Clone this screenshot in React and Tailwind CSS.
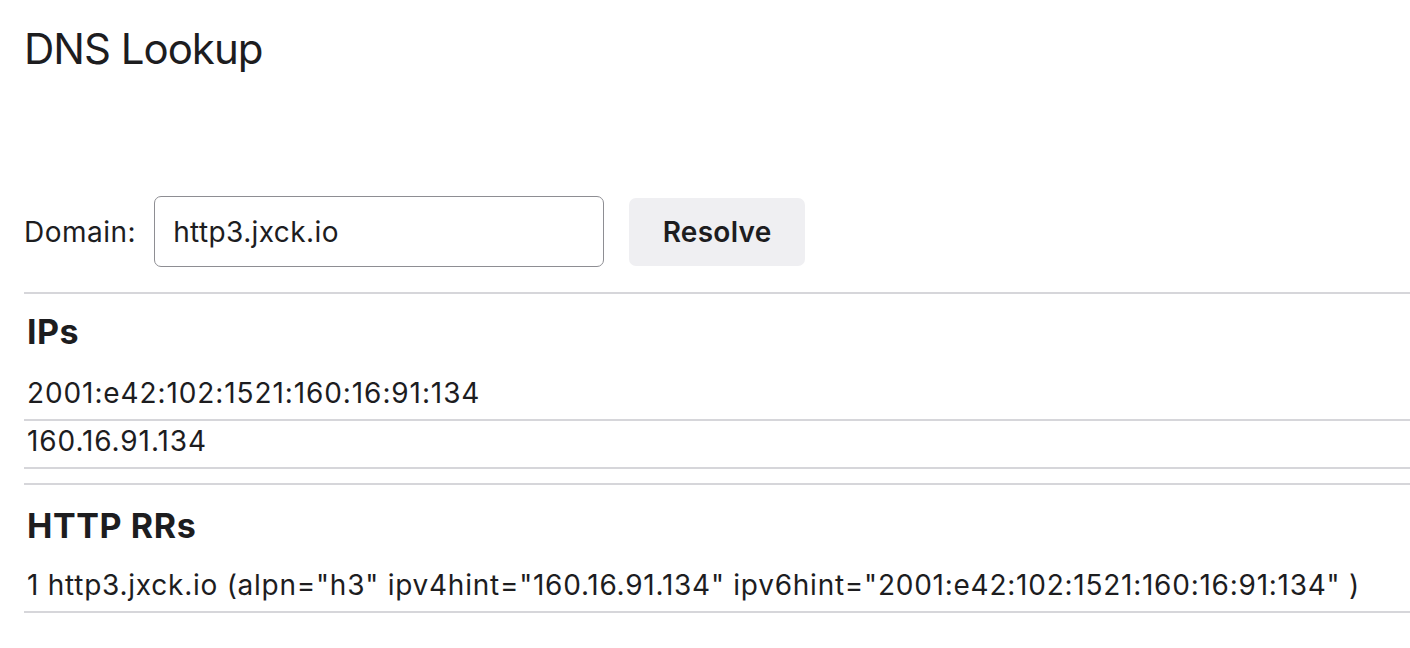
import React from "react";

export default function App() {
  const font = { fontFamily: "Inter, 'Liberation Sans', sans-serif" };
  return (
    <div className="min-h-screen bg-white pl-6 text-[#1d1d1f]" style={font}>
      <h1 className="mt-[22px] text-[42px] font-normal leading-[54px] tracking-[-1px]">DNS Lookup</h1>
      <div className="mt-[120px] flex items-center">
        <label className="text-[28px] leading-[34px] tracking-[0.5px]">Domain:</label>
        <input
          className="ml-[18px] h-[71px] w-[450px] rounded-[7px] border-[1.5px] border-[#8e8e93] px-[18px] text-[28px] tracking-[0.4px] outline-none"
          defaultValue="http3.jxck.io"
          style={font}
        />
        <button className="ml-[25px] h-[68px] w-[176px] rounded-[7px] bg-[#efeff2] text-[28px] font-semibold tracking-[0.3px]">
          Resolve
        </button>
      </div>
      <div className="mt-[25px] h-[2px] bg-[#d6d6da]" />
      <h2 className="mt-[18px] text-[34px] font-bold leading-[40px] pl-[3px] tracking-[0.4px]">IPs</h2>
      <ul className="mt-[21px]">
        <li className="border-b-2 border-[#d6d6da] pt-[3px] pb-[9px] pl-[3px] text-[28px] leading-[34px] tracking-[0.9px]">2001:e42:102:1521:160:16:91:134</li>
        <li className="border-b-2 border-[#d6d6da] pt-[3px] pb-[9px] pl-[3px] text-[28px] leading-[34px] tracking-[0.9px]">160.16.91.134</li>
      </ul>
      <div className="mt-[14px] h-[2px] bg-[#d6d6da]" />
      <h2 className="mt-[21px] text-[34px] font-bold leading-[40px] pl-[3px] tracking-[0.6px]">HTTP RRs</h2>
      <ul className="mt-[19px]">
        <li className="border-b-2 border-[#d6d6da] pt-[3px] pb-[9px] pl-[3px] text-[28px] leading-[34px] tracking-[0.75px]">
          1 http3.jxck.io (alpn="h3" ipv4hint="160.16.91.134" ipv6hint="2001:e42:102:1521:160:16:91:134" )
        </li>
      </ul>
    </div>
  );
}
